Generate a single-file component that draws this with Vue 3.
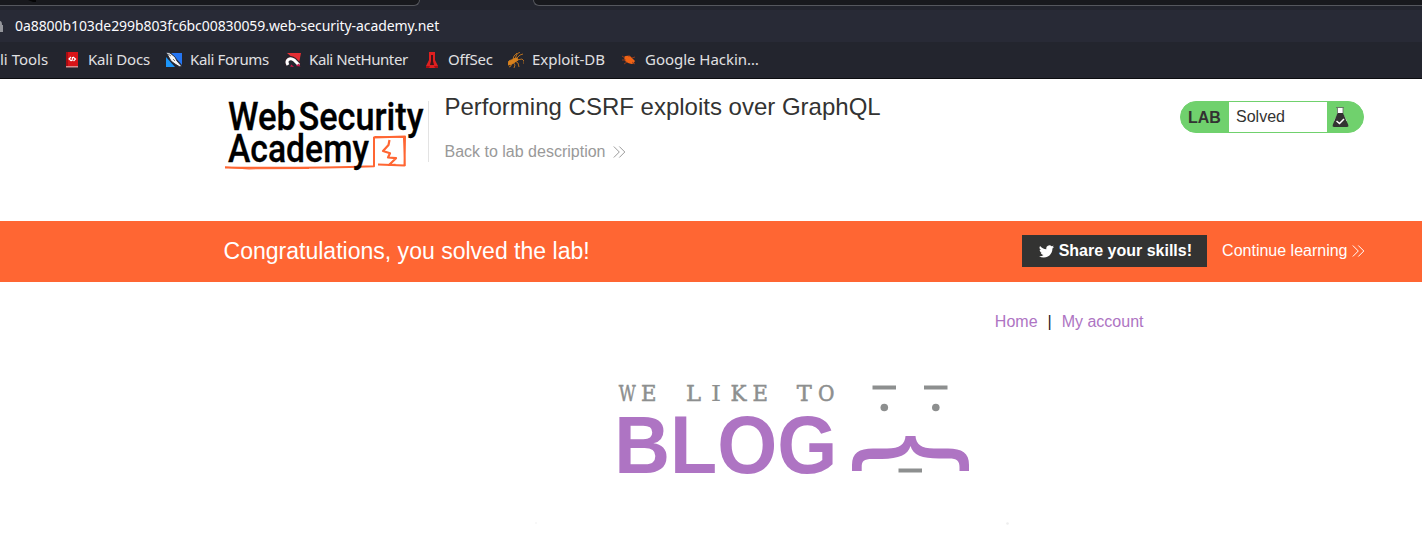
<script setup>
const bookmarks = [
  { id: 'docs', label: 'Kali Docs' },
  { id: 'forums', label: 'Kali Forums' },
  { id: 'hunter', label: 'Kali NetHunter' },
  { id: 'offsec', label: 'OffSec' },
  { id: 'exploit', label: 'Exploit-DB' },
  { id: 'google', label: 'Google Hackin…' },
]
const typed = [
  ['W', 618.8, 17], ['E', 641, 15.5], ['L', 686, 15], ['I', 710.8, 10.5],
  ['K', 730.5, 16], ['E', 752.5, 15.5], ['T', 796.8, 15], ['O', 818, 16.5],
]
</script>

<template>
  <div class="screen">
    <div class="browser">
      <div class="tabs">
        <div class="tab left">
          <svg width="10" height="3" viewBox="0 0 10 3"><path d="M0 0h8v2H5z" fill="#050506" /></svg>
        </div>
        <div class="tab right"></div>
      </div>
      <div class="address">
        <svg class="lock" width="4" height="12" viewBox="0 0 4 12"><path d="M0 1Q2 1 2 5H3V12H0Z" fill="#94959b" /></svg>
        <span class="url">0a8800b103de299b803fc6bc00830059.web-security-academy.net</span>
      </div>
      <div class="bookmarks">
        <div class="bm tools"><span>li Tools</span></div>
        <div v-for="b in bookmarks" :key="b.id" class="bm" :class="b.id">
          <svg width="16" height="16" viewBox="0 0 16 16">
            <g v-if="b.id === 'docs'">
              <path d="M2 0H14V14H2Z" fill="#d81418" /><path d="M2 0H4V14H2Z" fill="#a80c12" />
              <path d="M2 14H14V15.500H2Z" fill="#d98c8c" />
              <path d="M7 5 5 7 7.500 9M9 5l2.500 2L9.500 9M8.600 5 8 9" fill="none" stroke="#fff" stroke-width="1.200" />
            </g>
            <g v-else-if="b.id === 'forums'">
              <path d="M0 5V15H9Z" fill="#1c96fa" /><path d="M5 1H16V13Z" fill="#2475f2" />
              <path d="M0 0 4 1 9 5 11 9 15.500 14 14 15 9 12 5 9Z" fill="#f5f5f5" stroke="#202737" stroke-width=".9" />
              <path d="M2 2 5 4M7 7l2 2" stroke="#555" stroke-width=".8" />
            </g>
            <g v-else-if="b.id === 'hunter'">
              <path d="M2 1H16L14 11Z" fill="#e52e33" />
              <path d="M2.500 13C-.5 8 5 4.500 9 7.500L14.500 13" fill="none" stroke="#30202a" stroke-width="4.600" />
              <path d="M3 13C0 8 5 5 9 8L14 13" fill="none" stroke="#fff" stroke-width="3" />
              <path d="M5 14.500 6.500 12.500 9 15ZM11 14l2.500-2.500 2 3z" fill="#c9184a" />
            </g>
            <g v-else-if="b.id === 'offsec'">
              <path d="M5 0H11V8L14 14V16H2V14L5 8Z" fill="#df2020" />
              <path d="M7 3H9V9L10 13H6L7 9Z" fill="#421318" />
              <path d="M2 14H6L5 16H2ZM10 14h4v2h-3z" fill="#a90d13" />
            </g>
            <g v-else-if="b.id === 'exploit'" fill="none" stroke="#d9821d">
              <path d="M0 11C1 7 4 9 5 7L9 6 10 8 7 10 4 12 0 13Z" fill="#d9821d" />
              <path d="M7 7 9 2 12 0M8 7l4-4 3-1M9 8l5-1 2 2v3M7 9l3 2 1 4M5 10l2 3-1 3M3 11v3l-2 1M5 7 6 4l3-3" stroke-width=".8" />
            </g>
            <g v-else>
              <path d="M3 5Q5 3 9 4L14 9 12.500 11.500Q9 13 4 9Z" fill="#f06315" />
              <path d="M4 6 1 4M5 8H1M6 10l-3 2M8 5V3M11 6l3-1M11 10l3 2" fill="none" stroke="#9b3d1c" stroke-width=".9" />
            </g>
          </svg>
          <span>{{ b.label }}</span>
        </div>
      </div>
    </div>

    <header class="header">
      <svg class="logo" width="204" height="80" viewBox="0 0 204 80">
        <g class="logo-text">
          <text x="4" y="36" textLength="68" lengthAdjust="spacingAndGlyphs">Web</text>
          <text x="74.500" y="36" textLength="125" lengthAdjust="spacingAndGlyphs">Security</text>
        </g>
        <g fill="none" stroke="#ff6633" stroke-linejoin="round">
          <path d="M1 73.500Q80 74.500 150 72.300L150 43.500 181 42.500 180.500 71.500 154 70.500" stroke-width="2" />
          <path d="M1 73.200 25 74.800 85 74.300M150.500 42.500 181 43.300M179.500 43 181 72" stroke-width="1.200" />
          <path d="M165.500 46 164.500 51 159 57 166 59.300 164 63.500 172 64.200 165 71 171.500 70.800" stroke-width="2.200" />
        </g>
        <text class="logo-text" x="4" y="68" textLength="141" lengthAdjust="spacingAndGlyphs">Academy</text>
      </svg>
      <div class="heading">
        <h2>Performing CSRF exploits over GraphQL</h2>
        <a class="back">Back to lab description
          <svg width="13" height="12" viewBox="0 0 13 12"><path d="M.8.5 6.300 6 .8 11.500M6.300.5 11.800 6 6.300 11.500" /></svg>
        </a>
      </div>
      <div class="status">
        <b>LAB</b><span>Solved</span>
        <div class="flask">
          <svg width="17" height="21" viewBox="0 0 17 21">
            <path d="M5.500 1V7L2 14H15L11 7V1Z" fill="#fff" />
            <path d="M4 .5H12M5.500 1V6M11 1V6" stroke="#666" stroke-width=".8" />
            <path d="M5.500 6H11L16.300 18Q17 20 15 20H2Q0 20 .7 18Z" fill="#333332" />
            <path d="M4.500 14 7.500 16.500 12 12" fill="none" stroke="#fff" stroke-width="1.500" />
          </svg>
        </div>
      </div>
    </header>

    <section class="banner">
      <h3>Congratulations, you solved the lab!</h3>
      <div class="share">
        <svg width="15" height="13" viewBox="0 0 24 20"><path fill="#fff" d="M24 2.400c-.9.4-1.800.6-2.800.8 1-.6 1.800-1.600 2.100-2.700-.9.5-2 1-3.100 1.200A4.900 4.900 0 0 0 11.800 6.200C7.700 6 4.100 4 1.700 1A4.900 4.900 0 0 0 3.200 7.600c-.8 0-1.600-.2-2.200-.6v.1c0 2.400 1.700 4.400 3.900 4.800-.7.200-1.500.2-2.200.1.600 2 2.400 3.400 4.600 3.400A9.900 9.900 0 0 1 0 17.500 14 14 0 0 0 7.500 19.700c9.100 0 14.300-7.700 14-14.600 1-.7 1.800-1.600 2.500-2.700z" /></svg>
        <b>Share your skills!</b>
      </div>
      <a class="continue">Continue learning
        <svg width="13" height="12" viewBox="0 0 13 12"><path d="M.8.5 6.300 6 .8 11.500M6.300.5 11.800 6 6.300 11.500" /></svg>
      </a>
    </section>

    <nav class="nav"><a>Home</a><span>|</span><a>My account</a></nav>

    <svg class="blog" width="480" height="160" viewBox="530 370 480 160">
      <g class="typed">
        <text v-for="([ch, x, w], i) in typed" :key="i" :x="x" y="401" :textLength="w" lengthAdjust="spacingAndGlyphs" :class="{ bar: ch === 'I' }">{{ ch }}</text>
      </g>
      <text class="word" x="614.300" y="472.500" textLength="223" lengthAdjust="spacingAndGlyphs">BLOG</text>
      <g fill="#8d8f8f">
        <rect x="872.500" y="385.500" width="23.500" height="4" /><rect x="924" y="385.500" width="23.500" height="4" />
        <circle cx="884.300" cy="407.500" r="3.800" /><circle cx="935.800" cy="407.500" r="3.800" />
        <rect x="898.500" y="468.500" width="23.500" height="4" />
      </g>
      <path fill="#ae74c3" d="M905.500 436H915.500C916 444 921 448.500 934 448.500H948C962 448.500 969 453 969 465V471H959.500V467C959.500 461 957 458.500 949 458.500H939C922 458.500 913 455 910.500 446C908 455 899 458.500 882 459H872C864 459 861.700 461 861.700 467V471H852V465C852 453 859 448.500 873 448.500H887C900 448.500 905 444 905.500 436Z" />
      <circle cx="536" cy="523" r="1" fill="#f6f6f6" /><circle cx="1007.500" cy="523.500" r="1.300" fill="#eee" />
    </svg>
  </div>
</template>

<style>
body { margin: 0; background: #fff; }
</style>

<style scoped>
.screen { width: 1422px; height: 538px; overflow: hidden; background: #fff; color: #333332; font-family: "Liberation Sans", Arial, sans-serif; font-size: 16px; display: flex; flex-direction: column; }
svg { display: block; flex: none; }
.browser { height: 79px; flex: none; background: #23252e; font-family: "Noto Sans", sans-serif; color: #e0e0e2; box-sizing: border-box; border-bottom: 1px solid #0c0d10; }
.tabs { height: 10px; display: flex; justify-content: space-between; }
.tab { height: 5px; background: #18191d; border-bottom: 1px solid #55575d; }
.left { width: 391px; border-right: 1px solid #55575d; border-bottom-right-radius: 6px; padding-left: 28px; }
.right { width: 888px; border-left: 1px solid #55575d; border-bottom-left-radius: 6px; }
.address { height: 32px; background: #282a36; display: flex; align-items: center; }
.lock { margin-right: 11px; }
.url { color: #fbfbfe; font-size: 14px; line-height: 32px; white-space: nowrap; letter-spacing: -.075px; }
.bookmarks { height: 36px; display: flex; align-items: center; }
.bm { display: flex; align-items: center; font-size: 15px; height: 36px; white-space: nowrap; gap: 8px; letter-spacing: -.2px; }
.bm span { line-height: 34px; height: 36px; }
.tools { width: 64px; letter-spacing: 0; }
.docs { width: 102px; }
.forums { width: 119px; letter-spacing: -.37px; }
.hunter { width: 139px; letter-spacing: -.4px; }
.offsec { width: 84px; }
.exploit { width: 113px; letter-spacing: -.03px; }
.google { letter-spacing: -.03px; }
.header { height: 142px; flex: none; display: flex; align-items: flex-start; padding: 0 58px 0 224px; }
.logo { margin-top: 15px; overflow: visible; }
.logo-text { font-family: Roboto, sans-serif; font-size: 38px; font-weight: 500; fill: #000; stroke: #000; stroke-width: .3px; }
.heading { flex: 1; margin-top: 22px; height: 61px; border-left: 1px solid #e3e3e3; padding-left: 15.500px; }
h2 { margin: -10px 0 0; font-size: 24px; line-height: 32px; font-weight: 400; }
.back { display: flex; align-items: center; gap: 8px; margin-top: 19px; line-height: 20px; color: #999; }
.back path { fill: none; stroke: #999; stroke-width: 1; }
.status { width: 184px; height: 32px; margin-top: 22px; box-sizing: border-box; border: 1px solid #70d16d; border-radius: 16px; overflow: hidden; display: grid; grid-template-columns: 48px 98px 1fr; background: #70d16d; line-height: 31px; }
.status b { padding-left: 7px; }
.status span { background: #fff; padding-left: 7px; line-height: 30px; }
.flask { padding: 5px 0 0 5px; }
.banner { height: 61px; flex: none; background: #ff6633; color: #fff; display: flex; align-items: flex-start; padding: 14px 57.500px 0 223.500px; box-sizing: border-box; }
h3 { margin: 0; font-weight: 400; font-size: 23.040px; line-height: 32px; flex: 1; }
.share { width: 185px; height: 32px; box-sizing: border-box; padding-left: 1.500px; background: #333332; display: flex; align-items: center; justify-content: center; gap: 5px; margin-right: 15px; }
.continue { display: flex; align-items: center; gap: 4px; height: 32px; }
.continue path { fill: none; stroke: #fff; stroke-width: 1; }
.nav { height: 88px; flex: none; display: flex; justify-content: flex-end; padding: 30px 278.500px 0 0; gap: 10px; box-sizing: border-box; line-height: 20px; color: #ae74c3; }
.nav span { color: #222; }
.blog { margin-left: 530px; }
.typed { font-family: "DejaVu Serif", serif; font-size: 21.500px; fill: #8d8f8f; stroke: #8d8f8f; stroke-width: .5px; }
.typed .bar { stroke: none; }
.word { font-size: 81px; font-weight: 700; fill: #ae74c3; }
</style>
